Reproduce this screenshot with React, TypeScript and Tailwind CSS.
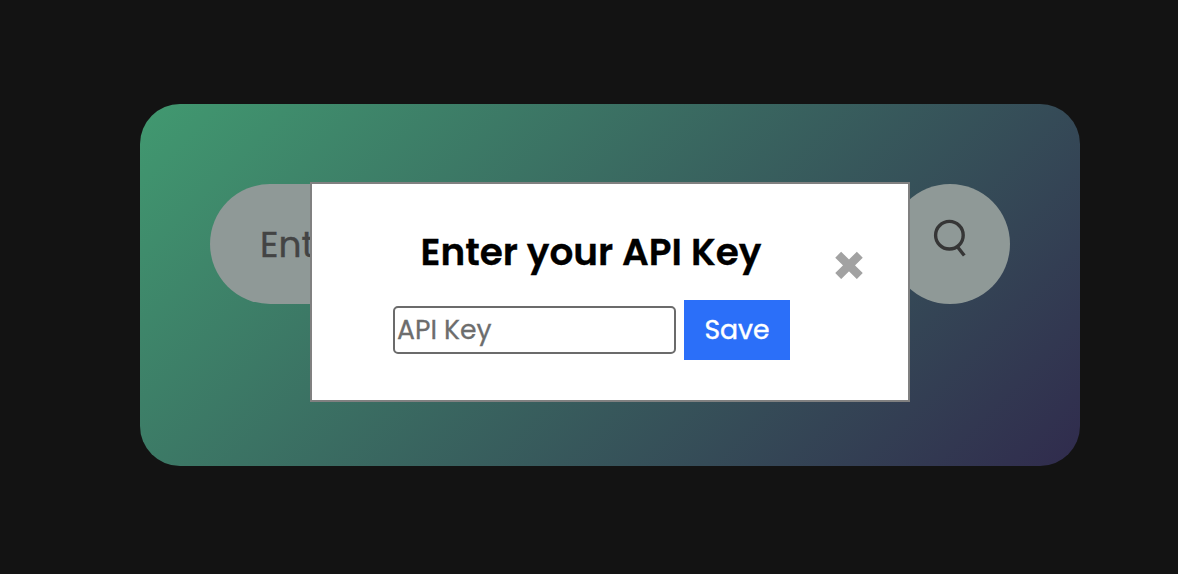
export default function App() {
  return (
    <div className="flex h-[574px] items-start overflow-hidden bg-[#131313] pl-[140px] pt-[104px] font-['Poppins','Open_Sans',sans-serif]">
      <main className="relative h-[362px] w-[940px] rounded-[40px] bg-[linear-gradient(135deg,#419970,#302b4d)] px-[70px] pt-[80px]">
        <div className="flex items-center justify-between">
          <div className="flex h-[120px] w-[640px] items-center rounded-[60px] bg-[#8f9997] pl-[50px] pt-px text-[36px] text-[#434444] [-webkit-text-stroke:0.4px_#434444]">
            Enter
          </div>
          <button className="flex size-[120px] items-center justify-center rounded-full bg-[#8f9997] pb-[12px]" aria-label="Search">
            <svg width="36" height="40" viewBox="0 0 36 40" fill="none" stroke="#363636" strokeWidth="3.4">
              <circle cx="17.4" cy="17.2" r="13.8" />
              <path d="M25 28.3l7.3 9.2" />
            </svg>
          </button>
        </div>
        <section className="absolute left-[170px] top-[78px] h-[220px] w-[600px] border-2 border-[#808080] bg-white">
          <h2 className="mt-[38px] flex h-[60px] items-center whitespace-nowrap pl-[108.5px] pt-[2px] text-[37.44px] font-semibold leading-none text-black [-webkit-text-stroke:0.3px_black]">
            Enter your API Key
          </h2>
          <div className="mt-[18px] flex items-center pl-[81px]">
            <input className="h-[48px] w-[283px] rounded-[5px] border-2 border-[#6b6b6b] px-[2px] text-[26.67px] [-webkit-text-stroke:0.3px_#6d6d6d] placeholder:text-[#6d6d6d]" placeholder="API Key" />
            <button className="ml-[8px] h-[60px] w-[106px] bg-[#2b6ff9] text-[26.67px] text-white [-webkit-text-stroke:0.4px_white]">Save</button>
          </div>
          <button className="absolute left-[523px] top-[67px]" aria-label="Close">
            <svg width="28" height="28" viewBox="0 0 28 28" stroke="#a2a2a2" strokeWidth="8.4"><path d="M3.2 3.7l21.6 21.4M24.8 3.7L3.2 25.1" /></svg>
          </button>
        </section>
      </main>
    </div>
  );
}
